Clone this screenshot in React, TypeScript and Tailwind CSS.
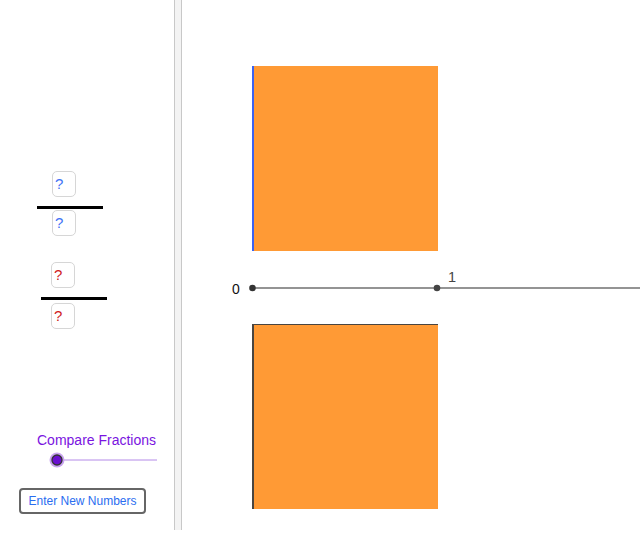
import React from "react";

function QBox({ color, className }: { color: string; className: string }) {
  return (
    <div
      className={`h-[26px] w-[24px] rounded-[5px] border-[1.5px] border-[#d6d6d6] bg-white pl-[2px] text-[15px] leading-[23px] ${color} ${className}`}
    >
      ?
    </div>
  );
}

export default function App() {
  return (
    <div
      className="flex h-[535px] w-[642px] overflow-hidden bg-white"
      style={{ fontFamily: '"Liberation Sans", Arial, sans-serif' }}
    >
      {/* Left panel */}
      <div className="flex w-[174px] shrink-0 flex-col">
        <QBox color="text-[#3f73f5]" className="ml-[52px] mt-[171px]" />
        <div className="ml-[37px] mt-[9px] h-[3px] w-[66px] bg-black" />
        <QBox color="text-[#3f73f5]" className="ml-[52px] mt-[1px]" />

        <QBox color="text-[#d01c1c]" className="ml-[51px] mt-[26px]" />
        <div className="ml-[41px] mt-[9px] h-[3px] w-[66px] bg-black" />
        <QBox color="text-[#d01c1c]" className="ml-[51px] mt-[3px]" />

        <div className="ml-[37px] mt-[103px] whitespace-nowrap text-[14px] leading-[16px] text-[#7a14e0]">
          Compare Fractions
        </div>
        <svg className="ml-[48px] mt-[4px]" width="112" height="16" viewBox="0 0 112 16">
          <line x1="9" y1="8" x2="109" y2="8" stroke="#b48ae8" strokeWidth="1" />
          <circle cx="9" cy="8" r="7.5" fill="#c9a4f0" />
          <circle cx="9" cy="8" r="5" fill="#6a0fd0" stroke="#333" strokeWidth="1.3" />
        </svg>
        <button className="ml-[19px] mt-[20px] h-[26px] w-[127px] rounded-[4px] border-2 border-[#666] bg-white text-[12px] leading-[22px] text-[#2a6df0]">
          Enter New Numbers
        </button>
      </div>

      {/* Divider */}
      <div className="flex h-[530px] w-[8px] shrink-0">
        <div className="w-px bg-[#c8c8c8]" />
        <div className="flex-1 bg-[#f3f3f3]" />
        <div className="w-px bg-[#c8c8c8]" />
      </div>

      {/* Canvas */}
      <div className="relative flex-1">
        <div className="absolute left-[70px] top-[66px] h-[185px] w-[186px] border-l-2 border-[#3b63f0] bg-[#ff9a35]" />
        <div className="absolute left-[70px] top-[324px] h-[185px] w-[186px] border-l-2 border-t border-[#4a4540] bg-[#ff9a35]" />
        <svg className="absolute left-0 top-0" width="460" height="535" viewBox="0 0 460 535">
          <line x1="70" y1="288" x2="458" y2="288" stroke="#707070" strokeWidth="1.5" />
          <circle cx="70.5" cy="288" r="3.3" fill="#333" />
          <circle cx="255" cy="288" r="3.3" fill="#444" />
          <text x="50" y="293.5" fontSize="14" fill="#111" fontFamily='"Liberation Sans", Arial, sans-serif'>
            0
          </text>
          <text x="266" y="282" fontSize="14.5" fill="#444" fontFamily='"Liberation Sans", Arial, sans-serif'>
            1
          </text>
        </svg>
      </div>
    </div>
  );
}
